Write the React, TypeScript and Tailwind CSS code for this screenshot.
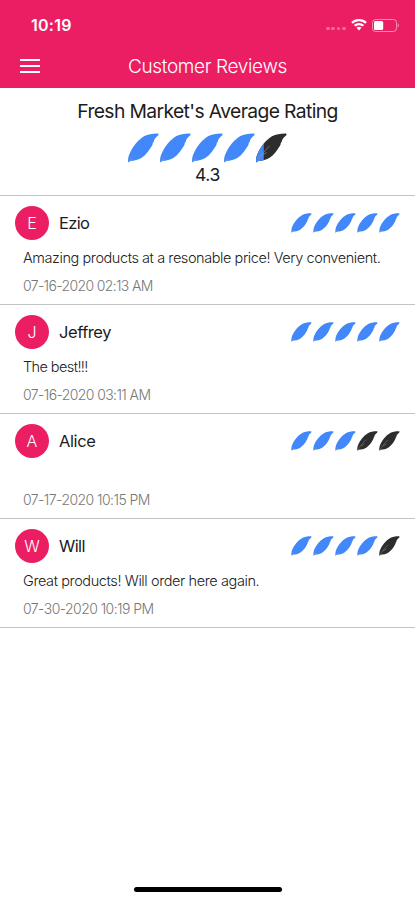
type Review = {
  name: string;
  rating: number;
  comment: string;
  date: string;
  nameClass: string;
  commentClass: string;
  dateClass: string;
  rowClass: string;
};

const REVIEWS: Review[] = [
  {
    name: "Ezio",
    rating: 5,
    comment: "Amazing products at a resonable price! Very convenient.",
    date: "07-16-2020 02:13 AM",
    nameClass: "tracking-[-0.7px]",
    commentClass: "tracking-[-0.43px]",
    dateClass: "tracking-[-0.64px]",
    rowClass: "h-[109px]"
  },
  {
    name: "Jeffrey",
    rating: 5,
    comment: "The best!!!",
    date: "07-16-2020 03:11 AM",
    nameClass: "tracking-[-0.45px]",
    commentClass: "tracking-[-0.6px]",
    dateClass: "tracking-[-0.6px]",
    rowClass: "h-[109px]"
  },
  {
    name: "Alice",
    rating: 3,
    comment: "",
    date: "07-17-2020 10:15 PM",
    nameClass: "tracking-[-0.4px]",
    commentClass: "",
    dateClass: "tracking-[-0.56px]",
    rowClass: "h-[105px]"
  },
  {
    name: "Will",
    rating: 4,
    comment: "Great products! Will order here again.",
    date: "07-30-2020 10:19 PM",
    nameClass: "tracking-[-0.6px]",
    commentClass: "tracking-[-0.4px]",
    dateClass: "tracking-[-0.56px]",
    rowClass: "h-[109px]"
  }
];

const LEAF_PATH =
  "M0.2 29.6 C-0.2 27.4 0.1 25.2 0.7 23 C1.9 18.8 4.6 14.2 7.8 10.4 C10.4 7.4 13 5 16 3.2 C20 1.1 25 0.3 29.6 0.4 C31 0.6 30.8 1.7 29.9 2.7 C28 4 26.6 5.8 26 7.6 C26.2 8.6 25.2 9.4 24.7 10.2 C24.9 11.4 23.8 13 22.8 14.6 C20.6 18.4 17.6 22.2 14 24.6 C10.8 26.8 6 27.9 2.4 28 Z";

function Leaf({ fill, className }: { fill: number; className: string }) {
  const clipId = `leaf-${Math.round(fill * 100)}`;

  return (
    <svg viewBox="0 0 31 30" className={className}>
      <defs>
        <clipPath id={clipId}>
          <rect x="0" y="0" width={31 * fill} height="30" />
        </clipPath>
      </defs>
      {fill < 1 && <path d={LEAF_PATH} fill="#2d2d2d" />}
      {fill > 0 && <path d={LEAF_PATH} fill="#4388fb" clipPath={`url(#${clipId})`} />}
      <path
        d={fill < 1 ? "M0.8 28.8 C4 23.5 8 18.5 13.5 13 M5.5 22.5 L10.8 19.5" : "M0.6 29 L3.8 25 M2.4 26.8 L5 26.2"}
        fill="none"
        stroke="#8c9096"
        strokeWidth="0.9"
        opacity="0.75"
      />
    </svg>
  );
}

function StatusBar() {
  return (
    <div className="flex h-[50px] items-center justify-between pl-[31px] pr-[16.5px]">
      <span className="text-[16px] font-semibold leading-5 tracking-[0.25px]">10:19</span>
      <div className="flex items-center">
        <div className="mr-[5px] mt-[7px] flex gap-[1.5px]">
          {[0, 1, 2, 3].map((dot) => (
            <span key={dot} className="size-[3.7px] rounded-full bg-white/35" />
          ))}
        </div>
        <svg viewBox="0 0 16 12" className="mr-[5px] h-[12px] w-[16px]" fill="white">
          <path d="M8 0C4.9 0 2.2 1.2 0.2 3.1L1.8 4.8C3.4 3.2 5.6 2.3 8 2.3C10.4 2.3 12.6 3.2 14.2 4.8L15.8 3.1C13.8 1.2 11.1 0 8 0Z" />
          <path d="M8 4C6 4 4.2 4.8 2.9 6L4.5 7.6C5.4 6.8 6.6 6.2 8 6.2C9.4 6.2 10.6 6.8 11.5 7.6L13.1 6C11.8 4.8 10 4 8 4Z" />
          <path d="M8 7.8C7.1 7.8 6.2 8.2 5.5 8.8L8 11.6L10.5 8.8C9.8 8.2 8.9 7.8 8 7.8Z" />
        </svg>
        <svg viewBox="0 0 27 13" className="h-[13px] w-[27px]">
          <rect x="0.5" y="0.5" width="24" height="12" rx="3.2" fill="none" stroke="white" strokeOpacity="0.5" />
          <rect x="2" y="2" width="9.2" height="9" rx="1.6" fill="white" />
          <path d="M25.7 4.6V8.4C26.5 8.1 26.9 7.3 26.9 6.5C26.9 5.7 26.5 4.9 25.7 4.6Z" fill="white" fillOpacity="0.5" />
        </svg>
      </div>
    </div>
  );
}

function Header() {
  return (
    <header className="h-[88px] bg-[#eb1e63] text-white">
      <StatusBar />
      <div className="grid h-[32px] grid-cols-[60px_1fr_60px] items-center">
        <button type="button" aria-label="Menu" className="-mt-px ml-[20px] flex w-[20px] flex-col gap-[4px]">
          <span className="h-[2px] bg-white" />
          <span className="h-[2px] bg-white" />
          <span className="h-[2px] bg-white" />
        </button>
        <h1 className="pt-[2px] text-center text-[19px] font-light leading-6 tracking-[-0.36px]">Customer Reviews</h1>
      </div>
    </header>
  );
}

function ReviewRow({ review }: { review: Review }) {
  return (
    <li className={`flex flex-col border-b border-[#c4c4c4] pt-[10px] ${review.rowClass}`}>
      <div className="flex items-center pl-[15px] pr-[15.5px]">
        <div className="flex size-[34px] items-center justify-center rounded-full bg-[#eb1e63] text-[16px] font-light text-white">
          {review.name[0]}
        </div>
        <span className={`ml-[10px] text-[16.5px] font-[430] leading-6 text-[#1c1c1c] ${review.nameClass}`}>{review.name}</span>
        <div className="ml-auto flex gap-[1px]">
          {[0, 1, 2, 3, 4].map((i) => (
            <Leaf key={i} fill={i < review.rating ? 1 : 0} className="h-[20px] w-[21px]" />
          ))}
        </div>
      </div>
      {review.comment && (
        <p className={`mt-[8px] whitespace-nowrap pl-[23px] text-[14.5px] font-light leading-5 text-[#222222] ${review.commentClass}`}>
          {review.comment}
        </p>
      )}
      <p className={`mb-[8px] mt-auto whitespace-nowrap pl-[23px] text-[14px] font-light leading-5 text-[#777777] ${review.dateClass}`}>
        {review.date}
      </p>
    </li>
  );
}

export default function App() {
  return (
    <div className="flex h-[900px] w-full flex-col bg-white font-['Inter',sans-serif]">
      <Header />
      <section className="flex h-[108px] flex-col items-center border-b border-[#c4c4c4] pt-[11px] text-[#1c1c1c]">
        <h2 className="whitespace-nowrap text-[19.3px] leading-6 tracking-[-0.62px]">Fresh Market's Average Rating</h2>
        <div className="mt-[10px] flex gap-[1px]">
          {[0, 1, 2, 3, 4].map((i) => (
            <Leaf key={i} fill={i < 4 ? 1 : 0.25} className="h-[30px] w-[31px]" />
          ))}
        </div>
        <span className="text-[17.5px] leading-6 tracking-[-0.3px]">4.3</span>
      </section>
      <ul>
        {REVIEWS.map((review) => (
          <ReviewRow key={review.name} review={review} />
        ))}
      </ul>
      <div className="mx-auto mb-[8px] mt-auto h-[5px] w-[148px] rounded-full bg-black" />
    </div>
  );
}
